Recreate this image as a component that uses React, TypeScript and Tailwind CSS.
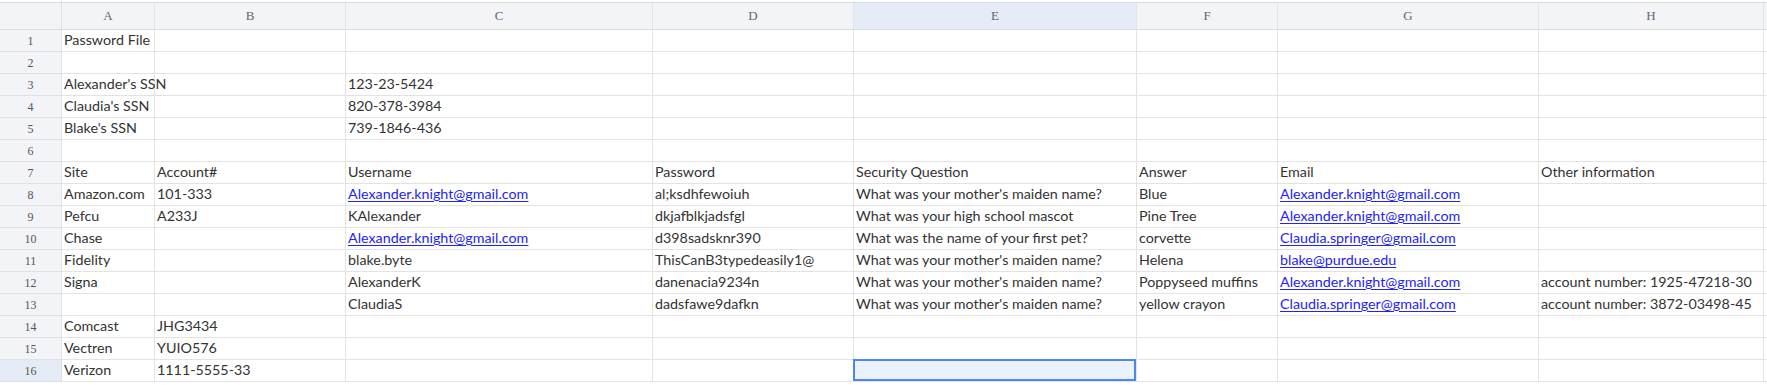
import React from "react";

type Cell = string | { link: string };

const cols = ["A", "B", "C", "D", "E", "F", "G", "H"];

const L = (s: string) => ({ link: s });

const rows: Cell[][] = [
  ["Password File"],
  [],
  ["Alexander's SSN", "", "123-23-5424"],
  ["Claudia's SSN", "", "820-378-3984"],
  ["Blake's SSN", "", "739-1846-436"],
  [],
  ["Site", "Account#", "Username", "Password", "Security Question", "Answer", "Email", "Other information"],
  ["Amazon.com", "101-333", L("Alexander.knight@gmail.com"), "al;ksdhfewoiuh", "What was your mother's maiden name?", "Blue", L("Alexander.knight@gmail.com"), ""],
  ["Pefcu", "A233J", "KAlexander", "dkjafblkjadsfgl", "What was your high school mascot", "Pine Tree", L("Alexander.knight@gmail.com"), ""],
  ["Chase", "", L("Alexander.knight@gmail.com"), "d398sadsknr390", "What was the name of your first pet?", "corvette", L("Claudia.springer@gmail.com"), ""],
  ["Fidelity", "", "blake.byte", "ThisCanB3typedeasily1@", "What was your mother's maiden name?", "Helena", L("blake@purdue.edu"), ""],
  ["Signa", "", "AlexanderK", "danenacia9234n", "What was your mother's maiden name?", "Poppyseed muffins", L("Alexander.knight@gmail.com"), "account number: 1925-47218-30"],
  ["", "", "ClaudiaS", "dadsfawe9dafkn", "What was your mother's maiden name?", "yellow crayon", L("Claudia.springer@gmail.com"), "account number: 3872-03498-45"],
  ["Comcast", "JHG3434"],
  ["Vectren", "YUIO576"],
  ["Verizon", "1111-5555-33"],
];

const gridCols = "grid grid-cols-[62px_93px_191px_307px_201px_283px_141px_261px_225px_4px]";

export default function App() {
  return (
    <div className="w-[1767px] h-[385px] bg-white overflow-hidden" style={{ fontFamily: "Lato, 'Noto Sans', sans-serif" }}>
      {/* top strip */}
      <div className="flex h-[2px]">
        <div className="w-[62px] border-r border-[#e1e1e1]" />
      </div>
      {/* column headers */}
      <div className={gridCols + " h-[28px] border-t border-b border-[#dcdcdc] bg-[#f3f4f8]"}>
        <div className="border-r border-[#e1e1e1]" />
        {cols.map((c) => (
          <div
            key={c}
            className={
              "flex items-center justify-center border-r border-[#e4e5ea] text-[13px] text-[#666] " +
              (c === "E" ? "bg-[#e5ecf8]" : "")
            }
            style={{ fontFamily: "'Liberation Serif', 'DejaVu Serif', serif" }}
          >
            {c}
          </div>
        ))}
        <div />
      </div>
      {/* rows */}
      {rows.map((r, ri) => (
        <div key={ri} className={gridCols + " h-[22px]"}>
          <div
            className={
              "flex items-center justify-center border-r border-b border-[#e1e1e1] text-[12px] text-[#555] " +
              (ri === 15 ? "bg-[#e5ecf8]" : "bg-[#f3f4f8]")
            }
            style={{ fontFamily: "'Liberation Serif', 'DejaVu Serif', serif" }}
          >
            {ri + 1}
          </div>
          {cols.map((c, ci) => {
            const v = r[ci];
            const selected = ri === 15 && c === "E";
            return (
              <div
                key={c}
                className={
                  "relative flex items-center whitespace-nowrap border-r border-b border-[#e3e3e3] pl-[2px] pb-[1px] text-[14.3px] leading-[20px] text-[#333] " +
                  (selected ? "bg-[#ebf1fd]" : "")
                }
              >
                {typeof v === "string" ? (
                  v
                ) : v ? (
                  <span className="text-[#2323f5] underline underline-offset-[2px] decoration-[#2323f5]">{v.link}</span>
                ) : null}
                {selected && (
                  <div className="absolute left-[-1px] top-[-1px] right-0 bottom-0 border-2 border-[#4a87ee]" />
                )}
              </div>
            );
          })}
          <div className="border-b border-[#e3e3e3]" />
        </div>
      ))}
    </div>
  );
}
